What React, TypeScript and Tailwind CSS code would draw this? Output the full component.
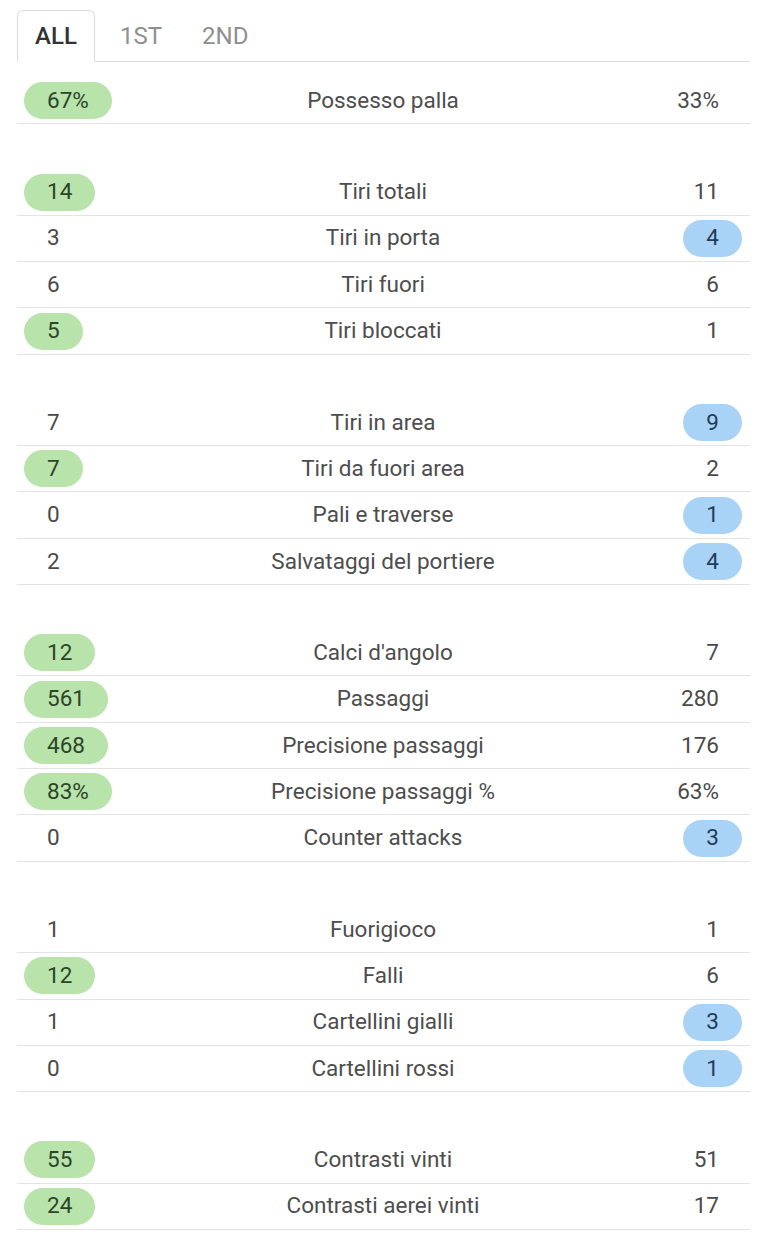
import React from "react";

type Stat = { home: string; label: string; away: string; win?: "home" | "away" };

const groups: Stat[][] = [
  [{ home: "67%", label: "Possesso palla", away: "33%", win: "home" }],
  [
    { home: "14", label: "Tiri totali", away: "11", win: "home" },
    { home: "3", label: "Tiri in porta", away: "4", win: "away" },
    { home: "6", label: "Tiri fuori", away: "6" },
    { home: "5", label: "Tiri bloccati", away: "1", win: "home" },
  ],
  [
    { home: "7", label: "Tiri in area", away: "9", win: "away" },
    { home: "7", label: "Tiri da fuori area", away: "2", win: "home" },
    { home: "0", label: "Pali e traverse", away: "1", win: "away" },
    { home: "2", label: "Salvataggi del portiere", away: "4", win: "away" },
  ],
  [
    { home: "12", label: "Calci d'angolo", away: "7", win: "home" },
    { home: "561", label: "Passaggi", away: "280", win: "home" },
    { home: "468", label: "Precisione passaggi", away: "176", win: "home" },
    { home: "83%", label: "Precisione passaggi %", away: "63%", win: "home" },
    { home: "0", label: "Counter attacks", away: "3", win: "away" },
  ],
  [
    { home: "1", label: "Fuorigioco", away: "1" },
    { home: "12", label: "Falli", away: "6", win: "home" },
    { home: "1", label: "Cartellini gialli", away: "3", win: "away" },
    { home: "0", label: "Cartellini rossi", away: "1", win: "away" },
  ],
  [
    { home: "55", label: "Contrasti vinti", away: "51", win: "home" },
    { home: "24", label: "Contrasti aerei vinti", away: "17", win: "home" },
  ],
];

function Value({ value, pill }: { value: string; pill?: "green" | "blue" }) {
  const bg =
    pill === "green"
      ? "bg-[#b8e3aa] text-[#2c4529]"
      : pill === "blue"
      ? "bg-[#a8d3f6] text-[#243c58]"
      : "text-[#4a4a4a]";
  return (
    <span className={`inline-flex h-[37px] items-center rounded-full px-[23px] ${bg}`}>
      {value}
    </span>
  );
}

export default function App() {
  return (
    <div
      className="min-h-[1235px] w-[767px] bg-white px-[17px] pt-[10px]"
      style={{ fontFamily: "Roboto, 'Liberation Sans', sans-serif" }}
    >
      {/* Tabs */}
      <div className="flex h-[52px] items-stretch border-b border-[#dcdcdc]">
        <div className="-mb-px flex w-[78px] items-center justify-center rounded-t-md border border-b-white border-[#dcdcdc] bg-white text-[24px] font-medium text-[#333]">
          ALL
        </div>
        <div className="ml-[25px] flex items-center text-[24px] text-[#8f8f8f]">1ST</div>
        <div className="ml-[40px] flex items-center text-[24px] text-[#8f8f8f]">2ND</div>
      </div>

      <div className="mt-[16px] flex flex-col gap-[45px]">
        {groups.map((rows, gi) => (
          <div key={gi}>
            {rows.map((s) => (
              <div
                key={s.label}
                className="flex h-[46.35px] items-center border-b border-[#e3e3e3] pl-[7px] pr-[8px] text-[22.5px]"
              >
                <div className="w-[200px]">
                  <Value value={s.home} pill={s.win === "home" ? "green" : undefined} />
                </div>
                <div className="flex-1 text-center text-[#4d4d4d]">{s.label}</div>
                <div className="flex w-[200px] justify-end">
                  <Value value={s.away} pill={s.win === "away" ? "blue" : undefined} />
                </div>
              </div>
            ))}
          </div>
        ))}
      </div>
    </div>
  );
}
